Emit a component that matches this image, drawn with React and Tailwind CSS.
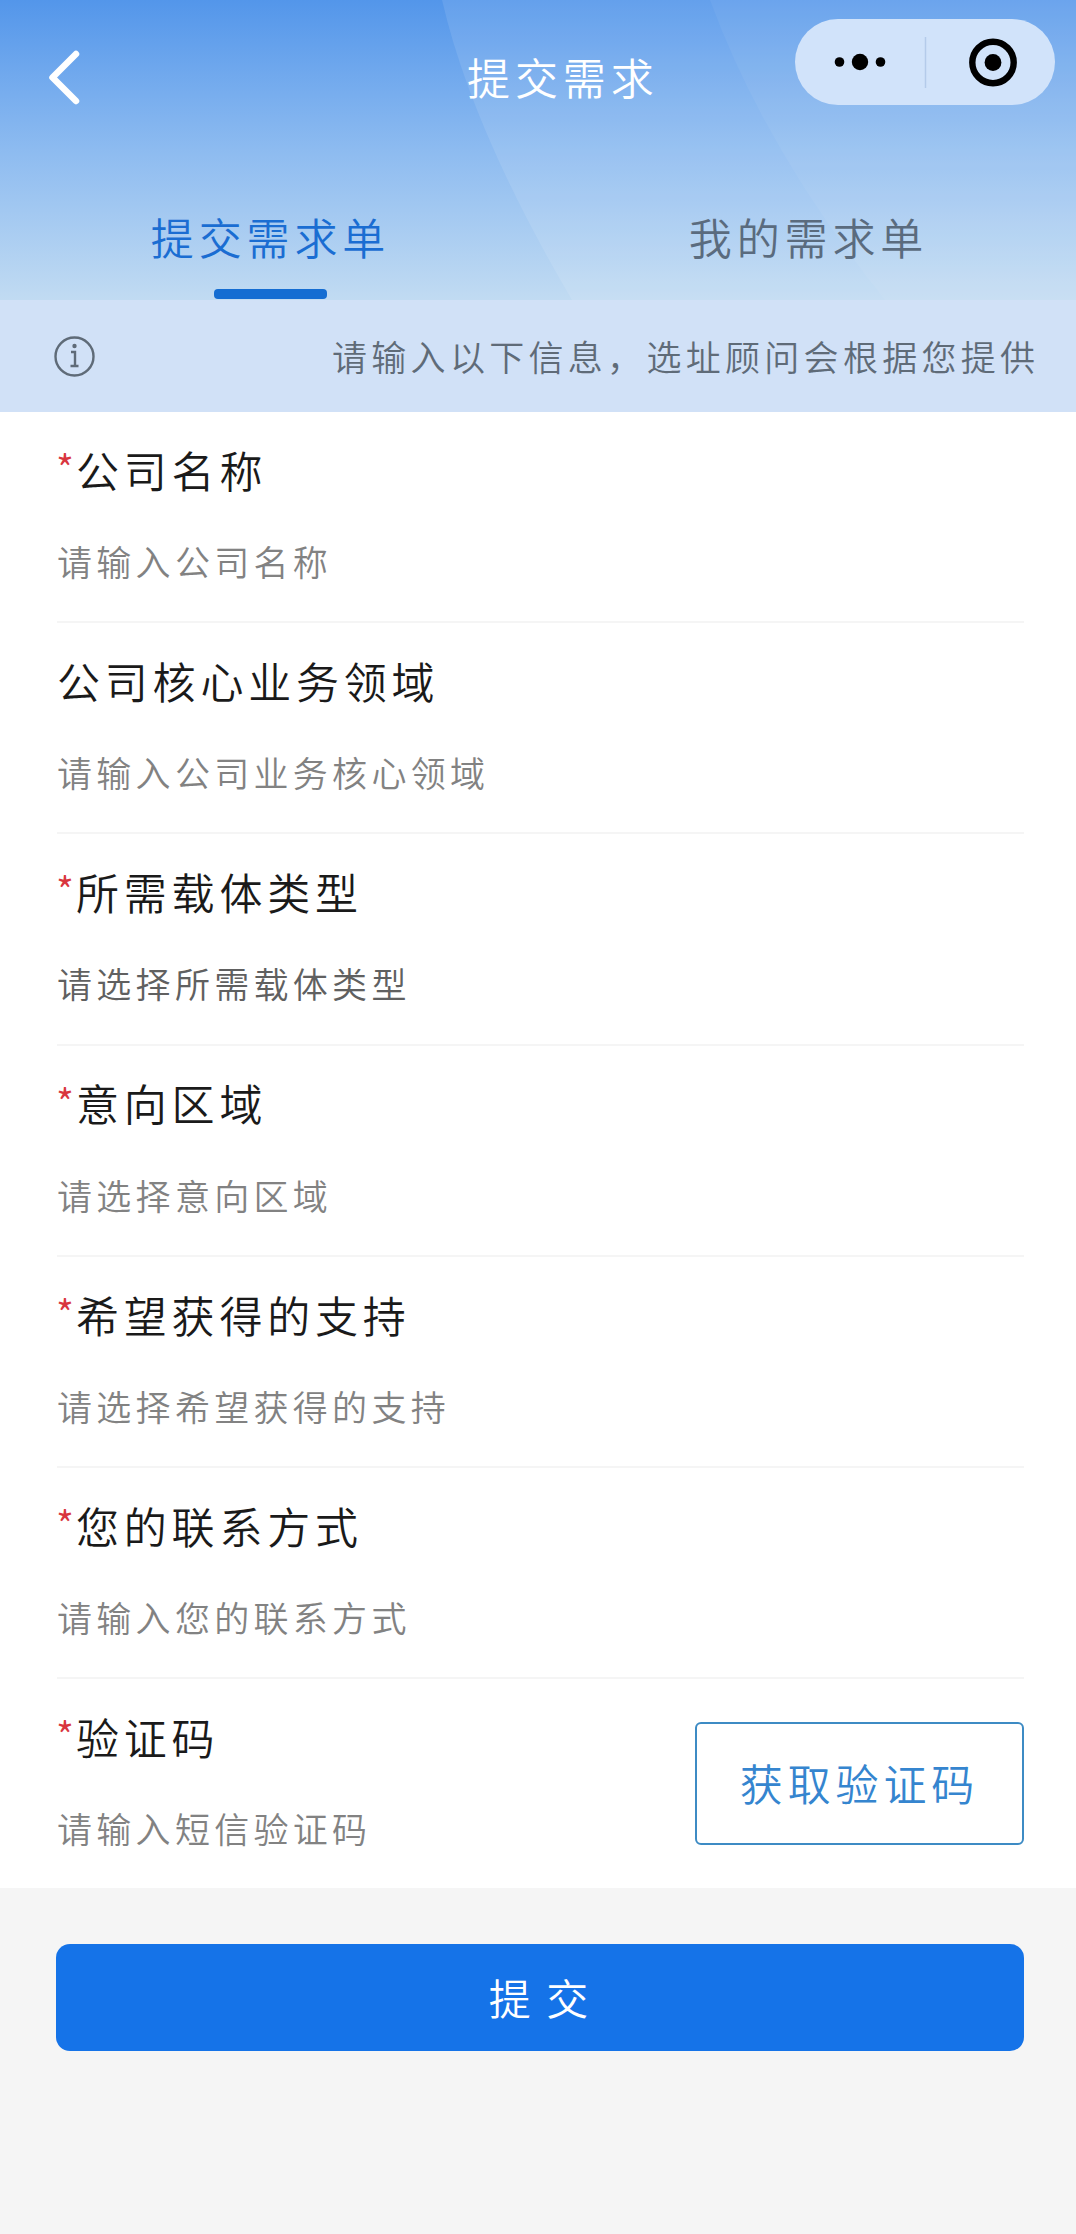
import React, { useState } from 'react';

const TABS = [
  { id: 'submit', label: '提交需求单' },
  { id: 'mine', label: '我的需求单' },
];

const FIELDS = [
  { id: 'company', label: '公司名称', placeholder: '请输入公司名称', required: true },
  { id: 'business', label: '公司核心业务领域', placeholder: '请输入公司业务核心领域' },
  { id: 'carrier', label: '所需载体类型', placeholder: '请选择所需载体类型', required: true, dark: true },
  { id: 'area', label: '意向区域', placeholder: '请选择意向区域', required: true },
  { id: 'support', label: '希望获得的支持', placeholder: '请选择希望获得的支持', required: true },
  { id: 'contact', label: '您的联系方式', placeholder: '请输入您的联系方式', required: true },
  { id: 'code', label: '验证码', placeholder: '请输入短信验证码', required: true, hasCode: true },
];

function Field({ field, value, onChange }) {
  const color = field.dark ? 'placeholder:text-[#606060]' : 'placeholder:text-[#828282]';

  return (
    <div className={`flex h-[211.2px] ml-[57px] mr-[52px] ${field.hasCode ? '' : 'border-b-2 border-[#f5f5f5]'}`}>
      <div className="flex-1 min-w-0 pt-[27px]">
        <label htmlFor={field.id} className="flex h-[60px] items-center text-[43px] tracking-[4.8px] text-[#1a1a1a]">
          {field.required && (
            <span className="-ml-px mr-px h-[60px] w-[19px] text-[39px] leading-[56px] tracking-normal text-[#d9363e]">*</span>
          )}
          {field.label}
        </label>
        <input
          id={field.id}
          value={value}
          onChange={(e) => onChange(field.id, e.target.value)}
          placeholder={field.placeholder}
          className={`block w-full h-[50px] mt-[37px] text-[35px] leading-[50px] tracking-[4.3px] text-[#333333] outline-none placeholder:opacity-100 ${color}`}
        />
      </div>
      {field.hasCode && (
        <button className="mt-[43px] h-[123px] w-[329px] shrink-0 rounded-md border-2 border-[#3d8bc4] pb-[3px] text-[43px] tracking-[4.9px] text-[#3585cf]">
          获取验证码
        </button>
      )}
    </div>
  );
}

export default function App() {
  const [tab, setTab] = useState('submit');
  const [form, setForm] = useState({});

  const handleChange = (id, value) => {
    setForm((prev) => ({ ...prev, [id]: value }));
  };

  return (
    <div className="flex h-[2234px] w-[1076px] flex-col overflow-hidden bg-[#f5f5f5] font-['Noto_Sans_CJK_SC',sans-serif] font-[350]">
      {/* Header */}
      <header className="relative flex h-[300px] flex-col bg-linear-to-b from-[#5396ea] via-[#8dbbf0] to-[#c1dbf2]">
        <svg className="absolute inset-0" width="1076" height="300" viewBox="0 0 1076 300" fill="#ffffff">
          <path d="M442 0 Q472 130 572 300 H1076 V0 Z" opacity="0.1" />
          <path d="M710 0 Q765 150 885 300 H1076 V0 Z" opacity="0.05" />
        </svg>

        <div className="relative flex h-[158px] items-start">
          <button className="mt-[46px] ml-[44px] h-[62px] w-[40px]">
            <svg width="40" height="62" viewBox="0 0 40 62" fill="none" stroke="#ffffff" strokeWidth="6.5" strokeLinecap="round" strokeLinejoin="round">
              <path d="M32 8 L8.5 31.5 L32 55" />
            </svg>
          </button>
          <h1 className="mt-[46px] ml-[383px] h-[60px] w-[328px] text-[43px] leading-[60px] tracking-[4.9px] text-white">提交需求</h1>

          {/* Mini program capsule */}
          <div className="mt-[19px] flex h-[86px] w-[260px] items-center rounded-full bg-[#d1e3fa]">
            <svg width="260" height="86" viewBox="0 0 260 86">
              <circle cx="44.5" cy="43" r="4.8" />
              <circle cx="65" cy="43" r="8.2" />
              <circle cx="85.5" cy="43" r="4.8" />
              <path d="M130.5 18 V69" stroke="#b4cbea" strokeWidth="1.5" />
              <circle cx="198" cy="43.5" r="20.7" fill="none" stroke="#000000" strokeWidth="6.4" />
              <circle cx="198" cy="43.5" r="8.4" />
            </svg>
          </div>
        </div>

        {/* Tabs */}
        <div className="relative flex h-[142px]">
          {TABS.map((t) => (
            <button
              key={t.id}
              onClick={() => setTab(t.id)}
              className={`flex flex-1 flex-col items-center justify-between pt-12 text-[43px] tracking-[4.9px] ${tab === t.id ? 'text-[#1a6dd2]' : 'text-[#5a6b7e]'}`}
            >
              <span className="h-[60px] pl-[3px] leading-[60px]">{t.label}</span>
              {tab === t.id && <span className="mb-px ml-[2px] h-[10px] w-[113px] rounded-[4px] bg-[#146dd2]" />}
            </button>
          ))}
        </div>
      </header>

      {/* Notice */}
      <div className="flex h-[112px] items-center bg-[#d1e1f7] text-[#5f6b78]">
        <svg className="ml-[54px]" width="41" height="41" viewBox="0 0 41 41" fill="none" stroke="currentColor" strokeWidth="2.4">
          <circle cx="20.5" cy="20.5" r="19" />
          <path d="M17 16 H21 V30 M16.5 30 H24.5" />
          <circle cx="20.5" cy="10" r="2.2" fill="currentColor" stroke="none" />
        </svg>
        <p className="ml-[237px] whitespace-nowrap text-[35px] leading-[50px] tracking-[4.3px]">
          请输入以下信息，选址顾问会根据您提供
        </p>
      </div>

      {/* Form */}
      <div className="h-[1476px] shrink-0 bg-white">
        {FIELDS.map((f) => (
          <Field key={f.id} field={f} value={form[f.id] || ''} onChange={handleChange} />
        ))}
      </div>

      <button className="mt-14 ml-[56px] h-[107px] w-[968px] shrink-0 rounded-[14px] bg-[#1573e8] pr-[3px] pb-[2px] text-[42px] [word-spacing:6px] text-white">
        提 交
      </button>
    </div>
  );
}
